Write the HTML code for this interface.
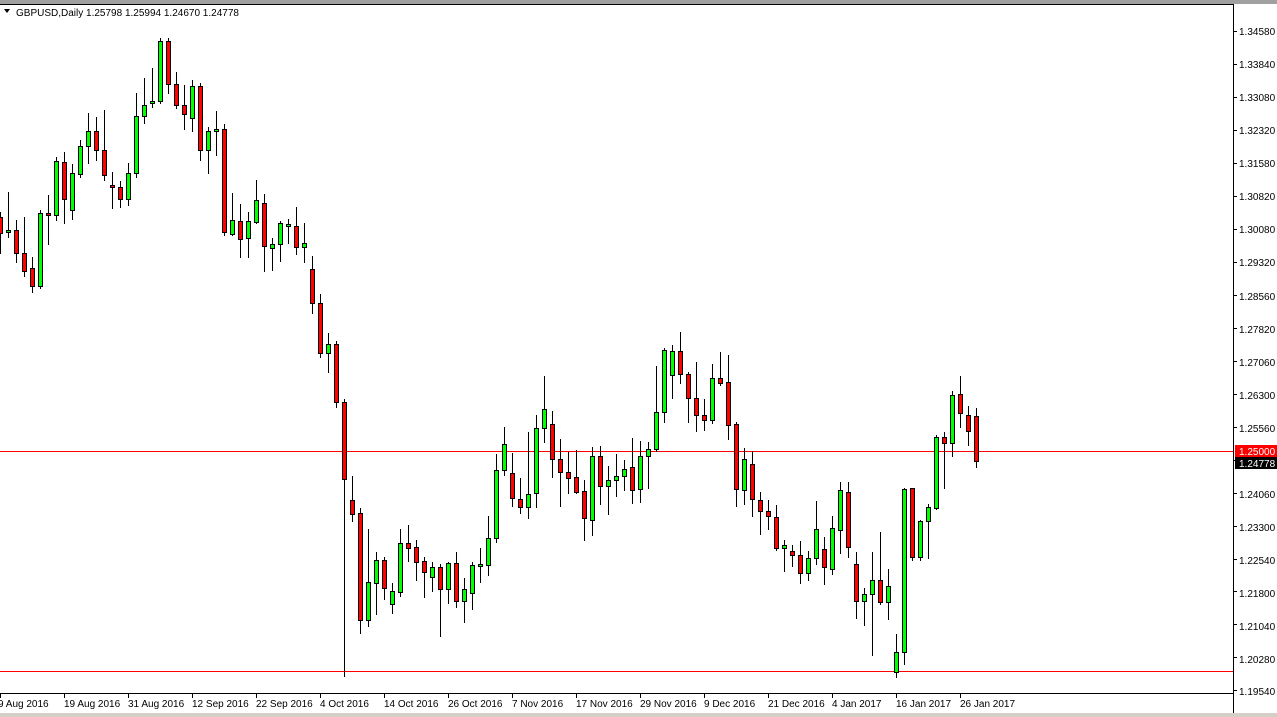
<!DOCTYPE html>
<html><head><meta charset="utf-8"><style>
html,body{margin:0;padding:0;background:#fff;}
body{width:1277px;height:717px;overflow:hidden;position:relative;font-family:"Liberation Sans",sans-serif;}
svg{position:absolute;left:0;top:0;}
</style></head><body>
<svg id="s" width="1277" height="717" xmlns="http://www.w3.org/2000/svg" font-family="Liberation Sans, sans-serif" font-size="10">
<rect x="0" y="0" width="1277" height="4" fill="#a0a0a0"/>
<rect x="0" y="713" width="1277" height="4" fill="#d4d0c8"/>
<line x1="0" y1="4.5" x2="1234" y2="4.5" stroke="#000"/>
<line x1="1233.5" y1="4" x2="1233.5" y2="713" stroke="#000"/>
<line x1="0" y1="693.5" x2="1234" y2="693.5" stroke="#000"/>
<line x1="0" y1="451.5" x2="1233" y2="451.5" stroke="#ff0000"/>
<line x1="0" y1="671.5" x2="1233" y2="671.5" stroke="#ff0000"/>
<polygon points="4,9 10,9 7,13" fill="#000"/>
<text x="16" y="16" font-size="10">GBPUSD,Daily  1.25798 1.25994 1.24670 1.24778</text>
<g id="c"></g>
<g id="ax"></g>
<rect x="1235" y="445" width="42" height="12" fill="#ff0000"/>
<text x="1239" y="455" fill="#fff">1.25000</text>
<rect x="1235" y="457" width="42" height="12" fill="#000"/>
<text x="1239" y="467" fill="#fff">1.24778</text>
<g font-size="10">
<text x="1239" y="35">1.34580</text><text x="1239" y="68">1.33840</text><text x="1239" y="101">1.33080</text>
<text x="1239" y="134">1.32320</text><text x="1239" y="167">1.31580</text><text x="1239" y="200">1.30820</text>
<text x="1239" y="233">1.30080</text><text x="1239" y="266">1.29320</text><text x="1239" y="300">1.28560</text>
<text x="1239" y="333">1.27820</text><text x="1239" y="366">1.27060</text><text x="1239" y="399">1.26300</text>
<text x="1239" y="432">1.25560</text><text x="1239" y="498">1.24060</text><text x="1239" y="531">1.23300</text>
<text x="1239" y="564">1.22540</text><text x="1239" y="597">1.21800</text><text x="1239" y="630">1.21040</text>
<text x="1239" y="663">1.20280</text><text x="1239" y="695">1.19540</text>
</g>
<g font-size="10">
<text x="-2" y="707">9 Aug 2016</text><text x="64" y="707">19 Aug 2016</text><text x="128" y="707">31 Aug 2016</text>
<text x="192" y="707">12 Sep 2016</text><text x="256" y="707">22 Sep 2016</text><text x="320" y="707">4 Oct 2016</text>
<text x="384" y="707">14 Oct 2016</text><text x="448" y="707">26 Oct 2016</text><text x="512" y="707">7 Nov 2016</text>
<text x="576" y="707">17 Nov 2016</text><text x="640" y="707">29 Nov 2016</text><text x="704" y="707">9 Dec 2016</text>
<text x="768" y="707">21 Dec 2016</text><text x="832" y="707">4 Jan 2017</text><text x="896" y="707">16 Jan 2017</text>
<text x="960" y="707">26 Jan 2017</text>
</g>
</svg>
<script>
var d=[
['r',217,233,212,253],['g',230,232,192,237],['r',230,253,220,262],['r',253,271,217,276],['r',268,286,257,292],
['g',213,286,210,288],['r',213,215,195,244],['g',161,215,157,220],['r',162,199,152,223],['g',173,210,164,219],
['g',146,174,140,177],['g',131,146,113,163],['r',131,150,117,160],['r',150,175,110,180],['r',185,187,172,208],
['r',187,199,181,207],['g',173,199,163,205],['g',116,173,93,177],['g',105,116,78,123],['g',101,103,68,107],
['g',41,101,38,103],['r',41,84,38,93],['r',84,105,72,108],['r',105,114,85,129],['g',86,118,80,131],
['r',86,150,83,160],['g',131,150,127,173],['g',129,131,111,155],['r',129,232,124,235],['g',220,234,193,235],
['r',221,239,204,257],['g',221,238,212,257],['g',200,222,180,223],['r',203,246,194,271],['g',244,248,238,270],
['g',223,244,221,261],['g',224,226,219,243],['r',226,247,207,254],['g',243,247,223,262],['r',269,303,256,313],
['r',303,353,294,357],['g',344,353,333,372],['r',344,402,341,407],['r',402,479,399,676],['r',500,514,476,521],
['r',513,620,508,633],['g',582,620,529,626],['g',560,583,552,614],['r',560,588,557,599],['g',591,604,583,613],
['g',543,592,529,596],['r',543,548,525,561],['r',547,562,540,580],['r',561,572,557,597],['g',567,577,562,591],
['r',567,589,564,636],['g',563,589,562,603],['r',563,601,552,607],['g',589,601,578,622],['g',565,593,562,609],
['g',564,565,548,582],['g',538,565,516,575],['g',470,538,454,542],['g',444,470,427,475],['r',473,498,453,506],
['r',499,507,478,513],['g',494,507,432,518],['g',428,493,415,507],['g',409,428,376,442],['r',424,459,411,477],
['r',459,472,439,506],['r',472,478,452,493],['r',477,492,450,493],['r',491,518,480,540],['g',456,520,447,535],
['r',456,486,446,504],['g',480,486,466,514],['g',476,480,454,496],['g',469,476,460,490],['r',467,490,438,503],
['g',456,489,441,502],['g',449,456,442,488],['g',412,449,366,451],['g',350,412,348,422],['g',351,375,345,398],
['r',351,374,332,383],['r',374,398,372,422],['r',398,415,362,431],['r',415,420,399,430],['g',378,420,364,423],
['r',378,383,352,385],['r',382,425,355,439],['r',424,489,422,506],['g',459,490,448,504],['r',464,499,451,516],
['r',500,511,492,534],['r',511,516,500,529],['r',517,548,505,550],['g',545,548,540,571],['r',551,555,545,566],
['r',555,573,541,583],['g',558,573,551,580],['g',529,558,501,564],['r',549,567,537,584],['g',528,569,516,574],
['g',490,530,482,553],['r',492,547,482,557],['r',564,601,552,618],['g',594,601,588,625],['g',580,594,552,655],
['r',580,602,532,604],['g',586,602,569,619],['g',652,672,634,677],['g',489,652,488,664],['r',488,557,488,560],
['g',521,557,520,560],['g',507,521,504,558],['g',437,508,435,509],['r',437,443,432,488],['g',395,443,391,456],
['r',394,413,376,427],['r',415,431,406,445],['r',416,461,408,467]
];
var g=document.getElementById('c'),h='',ax='';
for(var i=0;i<d.length;i++){var c=8*i,e=d[i];
h+='<line x1="'+(c+0.5)+'" y1="'+e[3]+'" x2="'+(c+0.5)+'" y2="'+(e[4]+1)+'" stroke="#000"/>';
var t=Math.min(e[1],e[2]),b=Math.max(e[1],e[2]);if(b-t<2)b=t+2;
h+='<rect x="'+(c-1.5)+'" y="'+(t+0.5)+'" width="4" height="'+(b-t)+'" fill="'+(e[0]=='g'?'#00ff00':'#ff0000')+'" stroke="#000"/>';}
g.innerHTML=h;
for(var k=0;k<16;k++){ax+='<line x1="'+(64*k+0.5)+'" y1="693" x2="'+(64*k+0.5)+'" y2="698" stroke="#000"/>';}
for(var j=0;j<21;j++){var y=Math.round(31+32.97*j)+0.5;ax+='<line x1="1233" y1="'+y+'" x2="1237" y2="'+y+'" stroke="#000"/>';}
document.getElementById('ax').innerHTML=ax;
</script>
</body></html>
